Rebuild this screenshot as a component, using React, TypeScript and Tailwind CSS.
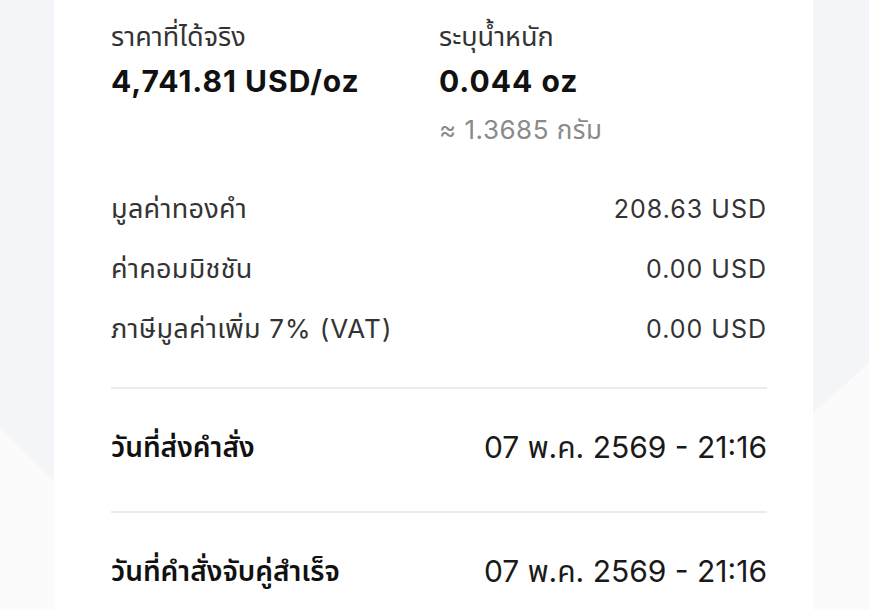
export default function App() {
    const rows = [
        { label: "มูลค่าทองคำ", value: "208.63 USD" },
        { label: "ค่าคอมมิชชัน", value: "0.00 USD" },
        { label: "ภาษีมูลค่าเพิ่ม", extra: "7% (VAT)", value: "0.00 USD" },
    ];
    const dates = [
        { label: "วันที่ส่งคำสั่ง", value: "07 พ.ค. 2569 - 21:16" },
        { label: "วันที่คำสั่งจับคู่สำเร็จ", value: "07 พ.ค. 2569 - 21:16" },
    ];

    return (
        <div className="h-[610px] overflow-hidden bg-[#f3f5f9] bg-[linear-gradient(225deg,transparent_917px,#fbfbfc_917px),linear-gradient(138deg,transparent_851px,#fbfbfc_851px)] pl-[54px] pr-[56px] font-['Inter','Noto_Sans_Thai','Noto_Sans',sans-serif]">
            <div className="h-full bg-white pl-[57px] pr-[46px] pt-[21px]">

                {/* ราคา / น้ำหนัก */}
                <div className="grid grid-cols-2">
                    <div>
                        <div className="text-[27px] leading-[32px] text-[#333333]">ราคาที่ได้จริง</div>
                        <div className="mt-[8px] text-[30px] leading-[40px] font-bold tracking-[1px] text-[#111111]">4,741.81 USD/oz</div>
                    </div>
                    <div>
                        <div className="text-[27px] leading-[32px] text-[#333333]">ระบุน้ำหนัก</div>
                        <div className="mt-[8px] text-[30px] leading-[40px] font-bold tracking-[1px] text-[#111111]">0.044 oz</div>
                        <div className="mt-[13px] text-[26px] leading-[32px] tracking-[0.5px] text-[#8a8a8a]">≈ 1.3685 กรัม</div>
                    </div>
                </div>

                {/* รายละเอียดค่าใช้จ่าย */}
                <div className="mt-[47px] flex flex-col gap-[28px]">
                    {rows.map((r) => (
                        <div key={r.label} className="flex items-center justify-between leading-[32px] text-[#333333]">
                            <span className="text-[27px] tracking-[0.3px]">
                                {r.label}
                                {r.extra && <span className="text-[26px] tracking-[1px]"> {r.extra}</span>}
                            </span>
                            <span className="text-[25px] tracking-[1px]">{r.value}</span>
                        </div>
                    ))}
                </div>

                <div className="mt-[42px]">
                    {dates.map((d) => (
                        <div key={d.label} className="flex items-center justify-between border-t-2 border-[#ebebeb] pt-[38px] pb-[44px]">
                            <span className="text-[28px] leading-[40px] font-semibold text-[#111111]">{d.label}</span>
                            <span className="text-[30px] leading-[40px] text-[#1a1a1a]">{d.value}</span>
                        </div>
                    ))}
                </div>
            </div>
        </div>
    );
}
